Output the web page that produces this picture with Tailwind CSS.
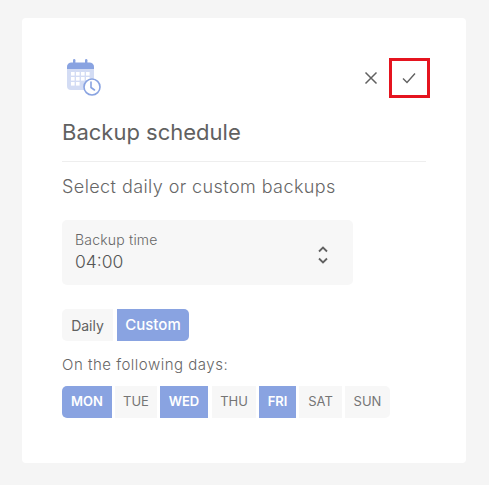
<!DOCTYPE html>
<html>
<head>
  <title>Backup schedule</title>
  <script src="https://cdn.jsdelivr.net/npm/@tailwindcss/browser@4"></script>
</head>
<body class="bg-[#f5f5f5] font-['Inter',sans-serif] h-[485px] overflow-hidden pt-[18px]">

  <div class="ml-[22px] w-[444px] h-[445px] bg-white rounded-[4px] pt-[40px] pl-[40px] pr-[40px]">

    <!-- Header -->
    <div class="flex justify-between items-start h-[40px]">
      <svg class="w-[40px] h-[40px]" viewBox="0 0 40 40">
        <path d="M5 9 a4 4 0 0 1 4-4 h19 a4 4 0 0 1 4 4 v19 a4 4 0 0 1-4 4 h-19 a4 4 0 0 1-4-4z" fill="#d3dcf4"/>
        <path d="M5 11 v-2 a4.5 4.5 0 0 1 4.5-4.5 h18 a4.5 4.5 0 0 1 4.5 4.5 v2z" fill="#89a3e1"/>
        <rect x="11" y="1" width="2.4" height="6" rx="1.2" fill="#89a3e1"/>
        <rect x="23" y="1" width="2.4" height="6" rx="1.2" fill="#89a3e1"/>
        <g fill="#fff">
          <rect x="9" y="14" width="3.6" height="3.6"/><rect x="14" y="14" width="3.6" height="3.6"/><rect x="19" y="14" width="3.6" height="3.6"/><rect x="24" y="14" width="3.6" height="3.6"/>
          <rect x="9" y="19" width="3.6" height="3.6"/><rect x="14" y="19" width="3.6" height="3.6"/><rect x="19" y="19" width="3.6" height="3.6"/><rect x="24" y="19" width="3.6" height="3.6"/>
          <rect x="9" y="24" width="3.6" height="3.6"/><rect x="14" y="24" width="3.6" height="3.6"/>
        </g>
        <circle cx="30" cy="29" r="8" fill="#fff" stroke="#89a3e1" stroke-width="1.6"/>
        <path d="M29 24 v5.5 l3.5 2.5" fill="none" stroke="#89a3e1" stroke-width="1.6" stroke-linecap="round"/>
      </svg>
      <div class="flex items-center mr-[-4px]">
        <button class="w-[36px] h-[40px] flex items-center justify-center">
          <svg class="w-[14px] h-[14px]" viewBox="0 0 14 14" fill="none" stroke="#616161" stroke-width="1.5"><path d="M1.5 1.5 L12.5 12.5 M12.5 1.5 L1.5 12.5"/></svg>
        </button>
        <button class="w-[41px] h-[40px] pr-[2px] flex items-center justify-center border-[3px] border-[#e5141f]">
          <svg class="w-[14px] h-[12px]" viewBox="0 0 14 12" fill="none" stroke="#616161" stroke-width="1.4"><path d="M1 6.5 L5 10.5 L13 1.5"/></svg>
        </button>
      </div>
    </div>

    <h1 class="mt-[19px] text-[22px] leading-[30px] font-normal text-[#616161] border-b border-[#eeeeee] pb-[14px] w-[364px]">Backup schedule</h1>
    <p class="mt-[12px] text-[18px] leading-[26px] tracking-[0.42px] font-light text-[#666666]">Select daily or custom backups</p>

    <!-- Time field -->
    <div class="mt-[20px] w-[291px] h-[65px] bg-[#f7f7f7] rounded-[5px] flex items-center justify-between pl-[13px] pr-[24px]">
      <div>
        <div class="text-[14px] leading-[16px] tracking-[0.2px] font-light text-[#666666]">Backup time</div>
        <div class="mt-[2px] text-[17.5px] leading-[24px] font-light text-[#555555]">04:00</div>
      </div>
      <svg class="w-[12px] h-[20px] mt-[5px]" viewBox="0 0 12 20" fill="none" stroke="#616161" stroke-width="1.8"><path d="M2 6.5 L6 2.5 L10 6.5 M2 13.5 L6 17.5 L10 13.5"/></svg>
    </div>

    <!-- Daily / Custom -->
    <div class="mt-[24px] flex gap-[4px] text-[14px] h-[32px]">
      <button class="w-[51px] bg-[#f7f7f7] text-[#616161] rounded-l-[5px]">Daily</button>
      <button class="w-[72px] bg-[#89a3e1] text-white text-[15px] font-medium rounded-r-[5px]">Custom</button>
    </div>

    <p class="mt-[13px] text-[15px] leading-[22px] tracking-[0.5px] font-light text-[#666666]">On the following days:</p>

    <!-- Days -->
    <div class="mt-[10px] flex gap-[3px] h-[32px] text-[13px]">
      <button class="w-[50px] bg-[#89a3e1] text-white font-semibold rounded-l-[5px]">MON</button>
      <button class="w-[42px] bg-[#f7f7f7] text-[#757575]">TUE</button>
      <button class="w-[48px] bg-[#89a3e1] text-white font-semibold">WED</button>
      <button class="w-[44px] ml-[1px] bg-[#f7f7f7] text-[#757575]">THU</button>
      <button class="w-[37px] bg-[#89a3e1] text-white font-semibold">FRI</button>
      <button class="w-[43px] bg-[#f7f7f7] text-[#757575]">SAT</button>
      <button class="w-[45px] bg-[#f7f7f7] text-[#757575] rounded-r-[5px]">SUN</button>
    </div>

  </div>

</body>
</html>
